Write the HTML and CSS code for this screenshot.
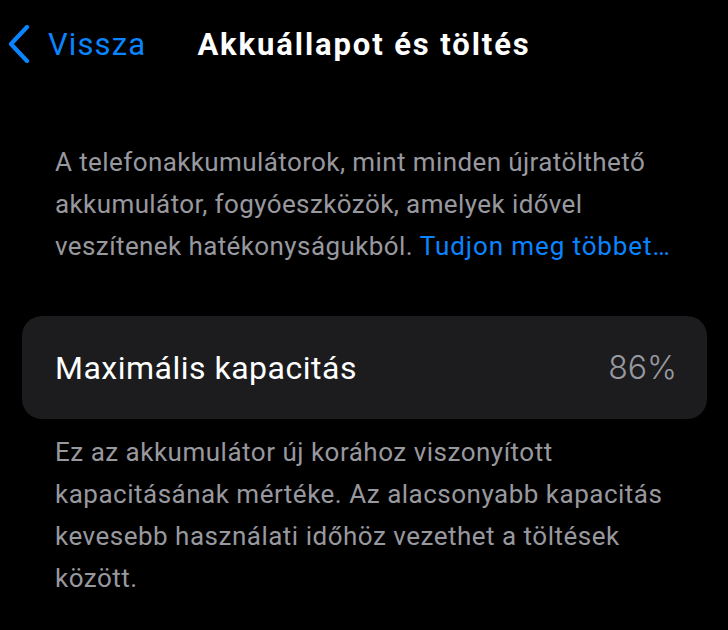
FILE: index.html
```html
<!DOCTYPE html>
<html lang="hu">
<head>
<meta charset="utf-8">
<link rel="stylesheet" href="styles.css">
</head>
<body>
<header class="nav">
  <a class="back">
    <svg class="chev" width="24" height="38" viewBox="0 0 24 38"><path d="M20 2 L4 19 L20 36" fill="none" stroke="#0a84ff" stroke-width="4.2" stroke-linecap="round" stroke-linejoin="round"/></svg>
    <span>Vissza</span>
  </a>
  <h1 class="title">Akkuállapot és töltés</h1>
  <div></div>
</header>
<p class="desc"><span class="plain">A telefonakkumulátorok, mint minden újratölthető akkumulátor, fogyóeszközök, amelyek idővel veszítenek hatékonyságukból.</span> <span class="link">Tudjon meg többet…</span></p>
<div class="card">
  <span class="label">Maximális kapacitás</span>
  <span class="value">86%</span>
</div>
<p class="foot">Ez az akkumulátor új korához viszonyított kapacitásának mértéke. Az alacsonyabb kapacitás kevesebb használati időhöz vezethet a töltések között.</p>
</body>
</html>
```
FILE: styles.css
```css
html, body {
  margin: 0;
  background: #000;
  font-family: Roboto, "Liberation Sans", sans-serif;
}
.nav {
  display: grid;
  grid-template-columns: 1fr auto 1fr;
  align-items: center;
  height: 88px;
}
.back {
  display: flex;
  align-items: center;
  color: #0a84ff;
  font-size: 31px;
  letter-spacing: 1.1px;
  padding-left: 7px;
}
.chev {
  margin-right: 17px;
}
.title {
  margin: 0;
  color: #fff;
  font-size: 31px;
  font-weight: 700;
  letter-spacing: 1.9px;
}
.desc {
  margin: 53px 0 0;
  padding: 0 40px 0 55px;
  color: #98989f;
  font-size: 26px;
  letter-spacing: 0.4px;
  line-height: 42px;
}
.link {
  color: #0a84ff;
  letter-spacing: 0.9px;
}
.card {
  margin: 49px 21px 0 22px;
  height: 103px;
  border-radius: 20px;
  background: #1c1c1e;
  display: flex;
  align-items: center;
  justify-content: space-between;
  padding: 0 30px 0 33px;
}
.label {
  color: #fff;
  font-size: 32px;
  letter-spacing: 0.5px;
}
.value {
  color: #98989f;
  font-family: Inter, Roboto, sans-serif;
  font-size: 32px;
  font-weight: 300;
}
.foot {
  margin: 12px 0 0;
  padding: 0 40px 0 55px;
  color: #98989f;
  font-size: 26px;
  letter-spacing: 0.5px;
  line-height: 42px;
}
```
